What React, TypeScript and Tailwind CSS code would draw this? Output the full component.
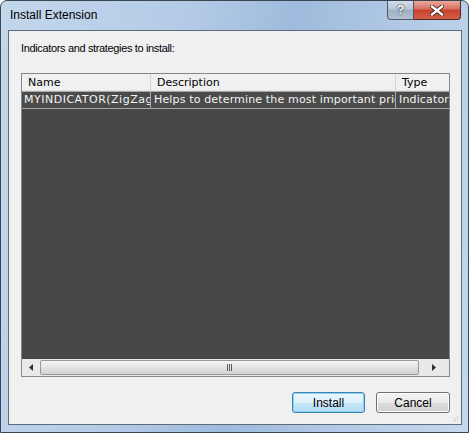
import React from 'react';

// one row of the extension list
interface ExtensionRow {
  name: string;
  description: string;
  type: string;
}

const rows: ExtensionRow[] = [
  {
    name: 'MYINDICATOR(ZigZag)',
    description: 'Helps to determine the most important price points',
    type: 'Indicator',
  },
];

const font = { fontFamily: '"Liberation Sans", Arial, sans-serif' };
const listFont = { fontFamily: '"DejaVu Sans", Verdana, sans-serif' };

const App: React.FC = () => {
  return (
    <div
      className="w-[469px] h-[433px] flex flex-col rounded-t-[7px] border border-[#3b4653] bg-[linear-gradient(100deg,#c3d7ec_0%,#b3cbe6_35%,#9fbadc_55%,#b6cde8_80%,#c5d8ec_100%)] overflow-hidden"
      style={font}
    >
      {/* title bar */}
      <div className="h-[29px] flex items-start justify-between shrink-0">
        <span className="pl-[9px] pt-[8px] text-[12px] text-black leading-none">Install Extension</span>
        <div className="flex mr-[7px]">
          <div className="w-[27px] h-[19px] rounded-bl-[4px] border border-t-0 border-[#4e5a68] bg-[linear-gradient(#d3dde9,#b9c7d7_45%,#9eb0c5_50%,#b3c2d4)] flex items-center justify-center text-[13px] font-bold text-white [text-shadow:0_0_1px_#223,0_0_2px_#223]">
            ?
          </div>
          <div className="w-[47px] h-[19px] rounded-br-[4px] border border-l-0 border-t-0 border-[#4e2a25] bg-[linear-gradient(#e9a99c,#d8705f_45%,#c7412c_50%,#d45f45)] flex items-center justify-center">
            <svg width="14" height="11" viewBox="0 0 14 11">
              <path d="M2 1.5 L12 9.5 M12 1.5 L2 9.5" stroke="#3a1810" strokeWidth="4" strokeLinecap="square" />
              <path d="M2 1.5 L12 9.5 M12 1.5 L2 9.5" stroke="#ffffff" strokeWidth="2.4" strokeLinecap="square" />
            </svg>
          </div>
        </div>
      </div>

      {/* client area */}
      <div className="ml-[7px] mr-[6px] mb-[7px] grow flex flex-col border border-[#5d6b7b] bg-[#f0f0f0] relative">
        <p className="pl-[12px] pt-[11px] text-[11px] tracking-[-0.35px] text-black leading-[13px]">Indicators and strategies to install:</p>

        {/* list view */}
        <div className="ml-[12px] mt-[18px] w-[429px] h-[304px] border border-[#828790] bg-[#474747] flex flex-col overflow-hidden" style={listFont}>
          <div className="flex h-[17px] bg-[#f0f0f0] text-[11px] text-black border-b border-[#e5e5e5] shrink-0">
            <div className="w-[129px] shrink-0 pl-[6px] border-r border-[#d5d5d5] leading-[17px]">Name</div>
            <div className="w-[245px] shrink-0 pl-[6px] border-r border-[#d5d5d5] leading-[17px]">Description</div>
            <div className="grow pl-[6px] leading-[17px]">Type</div>
          </div>
          <div className="grow">
            {rows.map((r) => (
              <div key={r.name} className="flex h-[18px] text-[11px] tracking-[0.15px] text-[#f4f4f4] border-t border-b border-[#a8a8a8] bg-[#4b4b4b]">
                <div className="w-[129px] shrink-0 pl-[2px] border-r border-[#a8a8a8] overflow-hidden whitespace-nowrap leading-[16px] tracking-[0.5px]">{r.name}</div>
                <div className="w-[245px] shrink-0 pl-[3px] border-r border-[#a8a8a8] overflow-hidden whitespace-nowrap leading-[16px]">{r.description}</div>
                <div className="w-[53px] shrink-0 pl-[3px] overflow-hidden whitespace-nowrap leading-[16px]">{r.type}</div>
              </div>
            ))}
          </div>

          {/* horizontal scrollbar */}
          <div className="h-[17px] bg-[#e9e9e9] flex items-center shrink-0">
            <div className="w-[18px] flex items-center justify-center">
              <svg width="4" height="7" viewBox="0 0 4 7"><path d="M4 0 L0 3.5 L4 7 Z" fill="#303030" /></svg>
            </div>
            <div className="h-[15px] w-[379px] rounded-[2px] border border-[#979797] bg-[linear-gradient(#f5f5f5,#e3e3e3_50%,#d3d3d3)] flex items-center justify-center">
              <div className="flex gap-[1px]">
                <span className="w-[1px] h-[7px] bg-[#5a5a5a]" />
                <span className="w-[1px] h-[7px] bg-[#5a5a5a]" />
                <span className="w-[1px] h-[7px] bg-[#5a5a5a]" />
              </div>
            </div>
            <div className="grow flex items-center justify-center">
              <svg width="4" height="7" viewBox="0 0 4 7"><path d="M0 0 L4 3.5 L0 7 Z" fill="#303030" /></svg>
            </div>
          </div>
        </div>

        {/* buttons */}
        <div className="flex justify-end gap-[11px] mt-[15px] mr-[11px]">
          <button className="w-[73px] h-[21px] rounded-[3px] border border-[#3c7fb1] bg-[linear-gradient(#ecf7fd,#dcf0fb_50%,#c3e5f8_51%,#b6ddf4)] shadow-[inset_0_0_0_1px_#8fd3f5] text-[12px] text-black leading-none">
            Install
          </button>
          <button className="w-[74px] h-[21px] rounded-[3px] border border-[#707070] bg-[linear-gradient(#f2f2f2,#ebebeb_50%,#dddddd_51%,#cfcfcf)] shadow-[inset_0_0_0_1px_#fcfcfc] text-[12px] text-black leading-none">
            Cancel
          </button>
        </div>

        {/* size grip */}
        <div className="absolute right-[3px] bottom-[3px] grid grid-cols-3 gap-[1px]">
          <span className="w-[1px] h-[1px]" />
          <span className="w-[1px] h-[1px]" />
          <span className="w-[1px] h-[1px] bg-[#b8b8b8]" />
          <span className="w-[1px] h-[1px]" />
          <span className="w-[1px] h-[1px] bg-[#b8b8b8]" />
          <span className="w-[1px] h-[1px] bg-[#b8b8b8]" />
          <span className="w-[1px] h-[1px] bg-[#b8b8b8]" />
          <span className="w-[1px] h-[1px] bg-[#b8b8b8]" />
          <span className="w-[1px] h-[1px] bg-[#b8b8b8]" />
        </div>
      </div>
    </div>
  );
};

export default App;
